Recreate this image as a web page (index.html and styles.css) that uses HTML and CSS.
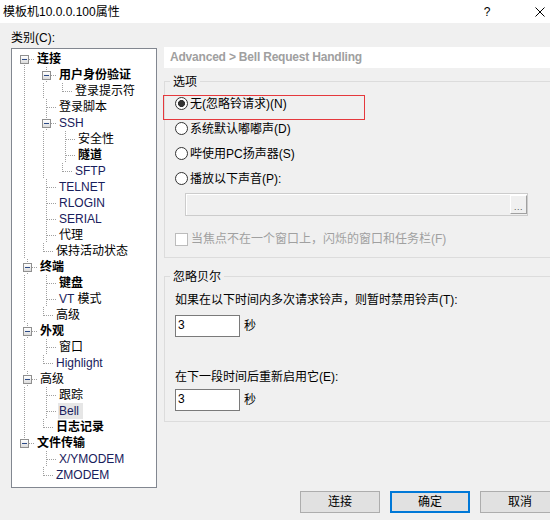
FILE: index.html
```html
<!DOCTYPE html>
<html lang="zh-CN">
<head>
<meta charset="utf-8">
<title>模板机10.0.0.100属性</title>
<link rel="stylesheet" href="styles.css">
</head>
<body>
<div class="titlebar">
  <span class="title">模板机10.0.0.100属性</span>
  <span class="help">?</span>
  <svg class="close" width="10" height="10" viewBox="0 0 10 10"><path d="M0.5 0.5 L9.5 9.5 M9.5 0.5 L0.5 9.5" stroke="#000" stroke-width="1" fill="none"/></svg>
</div>
<div class="main">
  <div class="left">
    <div class="cat-label">类别(C):</div>
    <div class="tree">
      <div class="row"><span class="c f"><span class="box"></span></span><span class="t b">连接</span></div>
      <div class="row"><span class="g v"></span><span class="c t"><span class="box"></span></span><span class="t b">用户身份验证</span></div>
      <div class="row"><span class="g v"></span><span class="g v"></span><span class="c l"></span><span class="t">登录提示符</span></div>
      <div class="row"><span class="g v"></span><span class="c t"></span><span class="t">登录脚本</span></div>
      <div class="row"><span class="g v"></span><span class="c t"><span class="box"></span></span><span class="t en">SSH</span></div>
      <div class="row"><span class="g v"></span><span class="g v"></span><span class="c t"></span><span class="t">安全性</span></div>
      <div class="row"><span class="g v"></span><span class="g v"></span><span class="c t"></span><span class="t b">隧道</span></div>
      <div class="row"><span class="g v"></span><span class="g v"></span><span class="c l"></span><span class="t en">SFTP</span></div>
      <div class="row"><span class="g v"></span><span class="c t"></span><span class="t en">TELNET</span></div>
      <div class="row"><span class="g v"></span><span class="c t"></span><span class="t en">RLOGIN</span></div>
      <div class="row"><span class="g v"></span><span class="c t"></span><span class="t en">SERIAL</span></div>
      <div class="row"><span class="g v"></span><span class="c t"></span><span class="t">代理</span></div>
      <div class="row"><span class="g v"></span><span class="c l"></span><span class="t">保持活动状态</span></div>
      <div class="row"><span class="c t"><span class="box"></span></span><span class="t b">终端</span></div>
      <div class="row"><span class="g v"></span><span class="c t"></span><span class="t b">键盘</span></div>
      <div class="row"><span class="g v"></span><span class="c t"></span><span class="t"><span class="en">VT</span> 模式</span></div>
      <div class="row"><span class="g v"></span><span class="c l"></span><span class="t">高级</span></div>
      <div class="row"><span class="c t"><span class="box"></span></span><span class="t b">外观</span></div>
      <div class="row"><span class="g v"></span><span class="c t"></span><span class="t">窗口</span></div>
      <div class="row"><span class="g v"></span><span class="c l"></span><span class="t en">Highlight</span></div>
      <div class="row"><span class="c t"><span class="box"></span></span><span class="t">高级</span></div>
      <div class="row"><span class="g v"></span><span class="c t"></span><span class="t">跟踪</span></div>
      <div class="row"><span class="g v"></span><span class="c t"></span><span class="t en sel">Bell</span></div>
      <div class="row"><span class="g v"></span><span class="c l"></span><span class="t b">日志记录</span></div>
      <div class="row"><span class="c l"><span class="box"></span></span><span class="t b">文件传输</span></div>
      <div class="row"><span class="g"></span><span class="c t"></span><span class="t en">X/YMODEM</span></div>
      <div class="row"><span class="g"></span><span class="c l"></span><span class="t en">ZMODEM</span></div>
    </div>
  </div>
  <div class="right">
    <div class="crumb">Advanced &gt; Bell Request Handling</div>
    <div class="group g1">
      <div class="group-title">选项</div>
      <div class="mark"></div>
      <div class="opt first"><span class="radio on"></span><span class="lbl">无(忽略铃请求)(N)</span></div>
      <div class="opt"><span class="radio"></span><span class="lbl">系统默认嘟嘟声(D)</span></div>
      <div class="opt"><span class="radio"></span><span class="lbl">哔使用PC扬声器(S)</span></div>
      <div class="opt"><span class="radio"></span><span class="lbl">播放以下声音(P):</span></div>
      <div class="field"><span class="dots">...</span></div>
      <div class="check"><span class="cbox"></span><span class="lbl dis">当焦点不在一个窗口上，闪烁的窗口和任务栏(F)</span></div>
    </div>
    <div class="group g2">
      <div class="group-title">忽略贝尔</div>
      <div class="line l1">如果在以下时间内多次请求铃声，则暂时禁用铃声(T):</div>
      <div class="num-row r1"><span class="num">3</span><span class="unit">秒</span></div>
      <div class="line l2">在下一段时间后重新启用它(E):</div>
      <div class="num-row r2"><span class="num">3</span><span class="unit">秒</span></div>
    </div>
  </div>
</div>
<div class="buttons">
  <span class="btn">连接</span>
  <span class="btn def">确定</span>
  <span class="btn">取消</span>
</div>
</body>
</html>
```
FILE: styles.css
```css
* { box-sizing: border-box; }
html, body {
  margin: 0;
  padding: 0;
  width: 550px;
  height: 520px;
  overflow: hidden;
}
body {
  background: #f0f0f0;
  font-family: "Liberation Sans", "Noto Sans CJK SC", sans-serif;
  font-size: 12px;
  color: #000;
  --dv: repeating-linear-gradient(to bottom, #a0a0a0 0 1px, transparent 1px 2px);
  --dh: repeating-linear-gradient(to right, #a0a0a0 0 1px, transparent 1px 2px);
}

/* title bar */
.titlebar {
  height: 23px;
  background: #fff;
  display: flex;
  align-items: center;
  padding-left: 3px;
}
.title { flex: 1; line-height: 16px; }
.help { width: 12px; text-align: center; margin-right: 42px; line-height: 16px; }
.close { flex: none; margin-right: 5px; display: block; }

/* main area */
.main {
  display: flex;
  align-items: flex-start;
  padding-left: 11px;
  height: 465px;
}
.left { width: 146px; flex: none; }
.cat-label { margin-top: 8px; height: 14px; line-height: 14px; }
.tree {
  margin-top: 3px;
  height: 440px;
  background: #fff;
  border: 1px solid #828790;
  padding: 2px 0 0 3px;
}
.row { display: flex; height: 16px; line-height: 16px; white-space: nowrap; }
.g, .c { width: 19px; height: 16px; flex: none; }
.g.v { background: var(--dv) 9px 0 / 1px 16px no-repeat; }
.c.t { background: var(--dv) 9px 0 / 1px 16px no-repeat, var(--dh) 10px 8px / 9px 1px no-repeat; }
.c.l { background: var(--dv) 9px 0 / 1px 9px no-repeat, var(--dh) 10px 8px / 9px 1px no-repeat; }
.c.f { background: var(--dv) 9px 8px / 1px 8px no-repeat, var(--dh) 10px 8px / 9px 1px no-repeat; }
.box {
  display: block;
  width: 9px;
  height: 9px;
  margin: 4px 0 0 5px;
  border: 1px solid #8f8f8f;
  background:
    linear-gradient(#2c4a86, #2c4a86) 1px 3px / 5px 1px no-repeat,
    linear-gradient(#ffffff, #dcdcdc);
}
.t { margin-left: 3px; }
.t.b { font-weight: bold; }
.en { color: #18205c; }
.t.sel { background: #e6e6e6; margin-left: 2px; padding: 0 4px 0 1px; }

/* right side */
.right { margin-left: 7px; margin-top: 24px; width: 400px; flex: none; }
.crumb {
  height: 21px;
  line-height: 21px;
  background: #fff;
  padding-left: 6px;
  font-weight: bold;
  color: #a0a0a0;
  letter-spacing: -0.2px;
}
.group {
  border: 1px solid #dcdcdc;
  position: relative;
  padding: 0 0 10px 10px;
}
.g1 { margin-top: 13px; }
.g2 { margin-top: 18px; }
.group-title {
  margin: -7px 0 0 -5px;
  padding: 0 3px;
  background: #f0f0f0;
  width: max-content;
  line-height: 14px;
  height: 14px;
}
.mark {
  position: absolute;
  left: -2px;
  top: 13px;
  width: 202px;
  height: 25px;
  border: 1px solid #e5393d;
}
.opt { display: flex; align-items: center; height: 25px; }
.opt.first { margin-top: 2px; }
.radio {
  width: 13px;
  height: 13px;
  flex: none;
  border-radius: 50%;
  border: 1px solid #333;
  background: #fff;
}
.radio.on { background: radial-gradient(circle, #333 0 3.2px, #fff 3.8px); }
.lbl { margin-left: 2px; line-height: 16px; white-space: nowrap; }
.field {
  margin: 2px 0 0 10px;
  width: 343px;
  height: 23px;
  border: 1px solid #cccccc;
  box-shadow: inset 1px 1px 0 #fff;
  background: #f0f0f0;
  display: flex;
  justify-content: flex-end;
  padding: 1px 0 1px 1px;
}
.dots {
  width: 17px;
  height: 19px;
  border: 1px solid;
  border-color: #fff #a0a0a0 #a0a0a0 #fff;
  font-size: 9px;
  line-height: 9px;
  color: #555;
  text-align: center;
  padding-top: 7px;
  letter-spacing: 0.5px;
}
.check { display: flex; align-items: center; height: 16px; margin-top: 15px; }
.cbox { width: 13px; height: 13px; flex: none; border: 1px solid #bcbcbc; background: #fff; }
.check .lbl { margin-left: 3px; }
.lbl.dis { color: #a0a0a0; }

.line { height: 16px; line-height: 16px; white-space: nowrap; }
.l1 { margin-top: 8px; }
.l2 { margin-top: 32px; }
.num-row { display: flex; align-items: center; }
.r1 { margin-top: 7px; }
.r2 { margin-top: 4px; }
.num {
  width: 65px;
  height: 22px;
  background: #fff;
  border: 1px solid #7a7a7a;
  padding-left: 2px;
  line-height: 18px;
}
.unit { margin-left: 4px; line-height: 16px; }

/* bottom buttons */
.buttons {
  display: flex;
  gap: 10px;
  padding-left: 300px;
  margin-top: 3px;
}
.btn {
  flex: none;
  width: 80px;
  height: 22px;
  background: #e1e1e1;
  border: 1px solid #adadad;
  display: flex;
  align-items: center;
  justify-content: center;
  line-height: 16px;
}
.btn.def { border: 2px solid #0078d7; }
```
